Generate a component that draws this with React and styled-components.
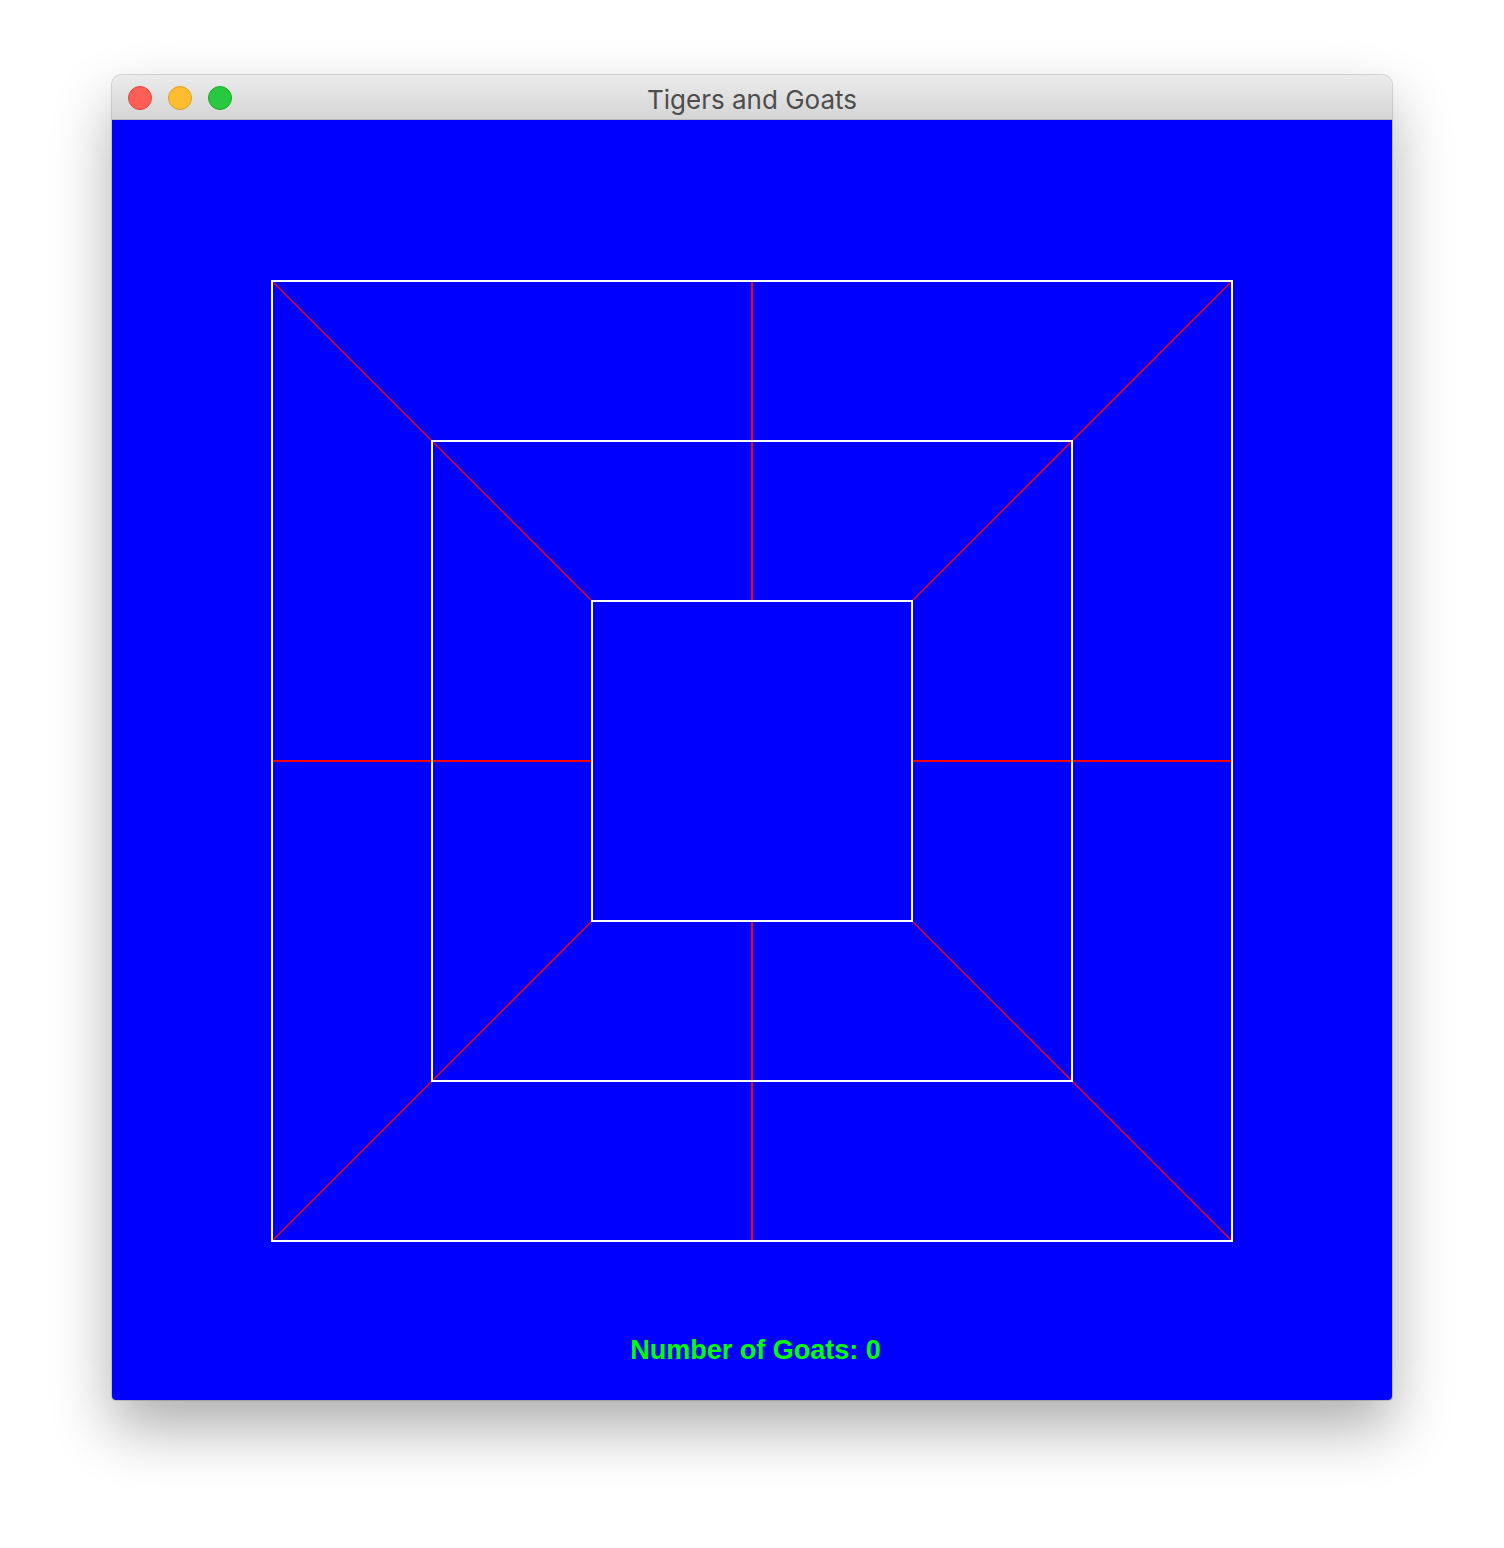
import React from 'react';
import styled, { createGlobalStyle } from 'styled-components';

const GlobalStyle = createGlobalStyle`
    html, body {
        margin: 0;
        padding: 0;
        background: #ffffff;
    }
`;

const Page = styled.div`
    width: 1504px;
    height: 1548px;
    padding: 75px 0 0 112px;
    box-sizing: border-box;
    background: #ffffff;
`;

const Window = styled.div`
    width: 1280px;
    display: flex;
    flex-direction: column;
    border-radius: 10px 10px 4px 4px;
    box-shadow: 0 28px 60px rgba(0, 0, 0, 0.32), 0 0 0 1px rgba(0, 0, 0, 0.14);
    overflow: hidden;
`;

const TitleBar = styled.div`
    height: 44px;
    padding-top: 2px;
    box-sizing: border-box;
    display: flex;
    align-items: center;
    position: relative;
    background: linear-gradient(#ebebeb, #d5d5d5);
    border-bottom: 1px solid #b8b8b8;
    box-sizing: content-box;
    height: 42px;
`;

const Lights = styled.div`
    display: flex;
    gap: 16px;
    padding-left: 16px;
`;

const Light = styled.span`
    width: 24px;
    height: 24px;
    border-radius: 50%;
    box-sizing: border-box;
    background: ${(p) => p.fill};
    border: 1px solid ${(p) => p.edge};
`;

const Title = styled.div`
    position: absolute;
    left: 0;
    right: 0;
    top: 9px;
    text-align: center;
    font-family: Inter, 'Liberation Sans', sans-serif;
    font-size: 26px;
    line-height: 32px;
    color: #4d4d4d;
    pointer-events: none;
`;

const Canvas = styled.div`
    height: 1280px;
    background: #0000ff;
    display: flex;
    flex-direction: column;
    align-items: center;
    padding-top: 160px;
    box-sizing: border-box;
`;

const Board = styled.svg`
    display: block;
`;

const Goats = styled.div`
    margin-top: 92px;
    padding-left: 7px;
    font-family: 'Liberation Sans', Arial, sans-serif;
    font-weight: bold;
    font-size: 27px;
    line-height: 32px;
    color: #00ff00;
`;

const squares = [1, 161, 321];

function App() {
    const size = 960;
    const c = 481;
    return (
        <Page>
            <GlobalStyle />
            <Window>
                <TitleBar>
                    <Lights>
                        <Light fill='#ff5f57' edge='#e0443e' />
                        <Light fill='#febc2e' edge='#dea123' />
                        <Light fill='#28c840' edge='#1aab29' />
                    </Lights>
                    <Title>Tigers and Goats</Title>
                </TitleBar>
                <Canvas>
                    <Board width='962' height='962' viewBox='0 0 962 962'>
                        {/* red joining lines */}
                        <g stroke='#ff0000' strokeWidth='2' shapeRendering='crispEdges'>
                            <line x1={c} y1='1' x2={c} y2='321' />
                            <line x1={c} y1='641' x2={c} y2='961' />
                            <line x1='1' y1={c} x2='321' y2={c} />
                            <line x1='641' y1={c} x2='961' y2={c} />
                        </g>
                        <g stroke='#ff0000' strokeWidth='1.3'>
                            <line x1='2' y1='2' x2='320' y2='320' />
                            <line x1='960' y1='2' x2='642' y2='320' />
                            <line x1='2' y1='960' x2='320' y2='642' />
                            <line x1='960' y1='960' x2='642' y2='642' />
                        </g>
                        {squares.map((o) => (
                            <rect
                                key={o}
                                x={o}
                                y={o}
                                width={size - (o - 1) * 2}
                                height={size - (o - 1) * 2}
                                fill='none'
                                stroke='#ffffff'
                                strokeWidth='2'
                                shapeRendering='crispEdges'
                            />
                        ))}
                    </Board>
                    <Goats>Number of Goats: 0</Goats>
                </Canvas>
            </Window>
        </Page>
    );
}

export default App;
